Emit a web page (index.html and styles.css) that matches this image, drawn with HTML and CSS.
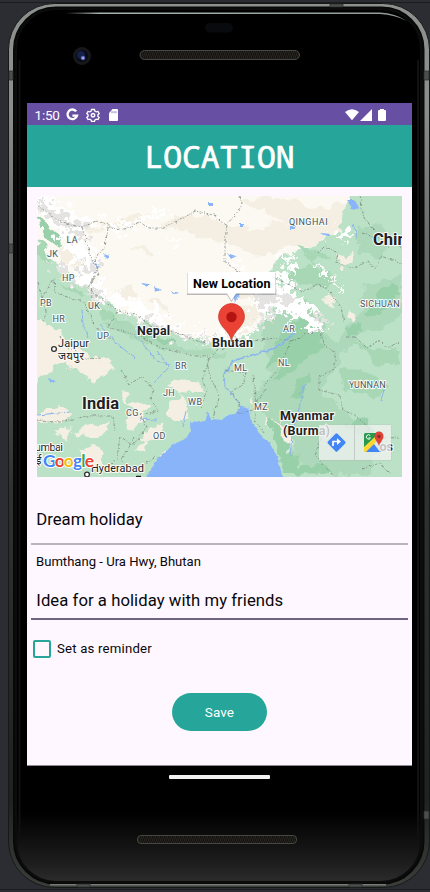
FILE: index.html
```html
<!DOCTYPE html>
<html lang="en">
<head>
<meta charset="utf-8">
<title>Location</title>
<link rel="stylesheet" href="styles.css">
</head>
<body>
<div class="stage">
  <svg class="frame" viewBox="0 0 430 892" aria-hidden="true">
    <defs>
      <linearGradient id="rim" x1="0" y1="0" x2="0" y2="1">
        <stop offset="0" stop-color="#8d918e"/><stop offset=".12" stop-color="#8a8d8a"/><stop offset=".3" stop-color="#626463"/><stop offset=".55" stop-color="#303131"/><stop offset=".9" stop-color="#202221"/><stop offset="1" stop-color="#3a3d3a"/>
      </linearGradient>
      <linearGradient id="glass" x1="0" y1="0" x2="0" y2="1">
        <stop offset="0" stop-color="#000"/><stop offset=".92" stop-color="#000"/><stop offset=".98" stop-color="#1e1e1e"/><stop offset="1" stop-color="#2c2c2c"/>
      </linearGradient>
      <linearGradient id="shine" x1="0" x2="1"><stop offset="0" stop-color="#98a39d" stop-opacity="0"/><stop offset=".1" stop-color="#a8b3ad"/><stop offset="1" stop-color="#929b96"/></linearGradient>
      <pattern id="mesh" width="4" height="6" patternUnits="userSpaceOnUse"><rect width="4" height="6" fill="#11100e"/><path d="M0 0 2 3 0 6M2 0 4 3 2 6" stroke="#3a3832" stroke-width=".6" fill="none"/></pattern>
    </defs>
    <path d="M0 2.5H430M0 889.5H430" stroke="#1b1c20"/>
    <rect x="8.500" y="3.500" width="421" height="884" rx="46" fill="url(#rim)" stroke="#171918"/>
    <rect x="14" y="7.500" width="409.500" height="876" rx="42" fill="#101110" stroke="#080808" stroke-width="2"/>
    <rect x="16" y="9" width="405" height="873" rx="40" fill="url(#glass)" stroke="#0c0c0c" stroke-width="2"/>
    <path d="M19.500 60V835M418 60V835" stroke="#111" stroke-width="2"/>
    <path d="M65 12.500H380Q395 13 407 21Q395 14.800 380 14H65Z" fill="url(#shine)"/>
    <path d="M50 884.700H386" stroke="#777b76" stroke-width="1.500"/>
    <path d="M9 71H13V80H9ZM424 71H429V80H424ZM330 4H343V7H330ZM9 244H13V253H9ZM424 811H429V819H424ZM77 884H90V887H77ZM349 884H362V887H349Z" fill="#4b4e4c" stroke="#292b2a" stroke-width=".7"/>
    <rect x="205" y="23" width="28" height="9.500" rx="4.700" fill="#090a0e"/>
    <circle cx="82" cy="56" r="9" fill="#17181a"/><circle cx="82" cy="56" r="6" fill="#080a16"/><circle cx="81" cy="55" r="4" fill="#15204b"/><circle cx="83" cy="58" r="2.300" fill="#5966b4"/><circle cx="83" cy="58" r="1" fill="#b3bcf6"/>
    <rect x="140" y="50.500" width="159.500" height="9" rx="4.500" fill="url(#mesh)" stroke="#464642"/>
    <rect x="137.500" y="835.500" width="159" height="8" rx="3.500" fill="url(#mesh)" stroke="#464642"/>
  </svg>

  <main class="screen">
    <div class="status">
      <span class="time">1:50</span>
      <svg class="left-icons" viewBox="0 0 53 14">
        <path d="M10.200 3.400A4.800 4.800 0 1 0 11 7.600H6.400" fill="none" stroke="#fff" stroke-width="2.300"/>
        <g transform="translate(27 7)" fill="none" stroke="#fff"><path d="M-1.500-5.500h3l.5 1.700 1.300.7 1.700-.5 1.200 2.200-1.300 1.200v1.500l1.200 1.200L5 4.600l-1.700-.4L2 4.900l-.5 1.400h-3L-2 4.900l-1.300-.7-1.700.4-1.200-2.200 1.300-1.200V-.3L-6.200-1.500-5-3.600l1.700.5L-2-3.800Z" stroke-width="1.300"/><circle cy=".3" r="1.700" stroke-width="1.500"/></g>
        <path d="M43 5.200 46.500 1H51q1 0 1 1v10.200q0 .8-1 .8H43.800q-.8 0-.8-.8Z" fill="#fff"/><path d="M46 3.200v2M48 3.200v2M50 3.200v2" stroke="#6650a2" stroke-width=".7"/>
      </svg>
      <svg class="right-icons" viewBox="0 0 42 14"><path d="M0 4Q7-1.500 14 4L7 12.300ZM15 13H27V1ZM33 3Q33 2.200 34 2H35V1H39V2H40Q41 2.200 41 3V12Q41 13 40 13H34Q33 13 33 12Z" fill="#fff"/></svg>
    </div>
    <header class="title">LOCATION</header>
    <section class="content">
      <svg class="map" viewBox="0 0 365 281" role="img" aria-label="Map of Bhutan">
        <defs>
          <filter id="rough" x="-5%" y="-5%" width="110%" height="110%"><feTurbulence type="fractalNoise" baseFrequency=".09" numOctaves="3" seed="4"/><feDisplacementMap in="SourceGraphic" scale="13" xChannelSelector="R" yChannelSelector="G"/></filter>
          <filter id="peaks" x="-5%" y="-5%" width="110%" height="110%"><feTurbulence type="fractalNoise" baseFrequency=".13" numOctaves="3" seed="11"/><feDisplacementMap in="SourceGraphic" scale="34" xChannelSelector="R" yChannelSelector="G"/></filter>
          <filter id="coast"><feTurbulence type="fractalNoise" baseFrequency=".18" numOctaves="2" seed="8"/><feDisplacementMap in="SourceGraphic" scale="4" xChannelSelector="R" yChannelSelector="G"/></filter>
        </defs>
        <rect width="365" height="281" fill="#bbe2c6"/>
        <g filter="url(#rough)">
          <path d="M-9-9H315L300 28 280 48 240 62 230 82 246 94 231 120 216 136 183 147 145 139 111 126 81 112 61 98 47 85 24 73 7 56-9 45Z" fill="#fcf9f3"/>
          <path d="M-8 124H9L22 134 30 144 43 151 55 162 68 164 78 172 65 180 58 187 48 178 36 174 25 166 12 177 3 185-8 196Z" fill="#f5f0e3"/>
          <g fill="#f4efe2">
            <path d="M18 55 32 50 43 61 53 77 59 99 44 84ZM30 35 70 29 97 18 112 18 90 34ZM95 50 111 52 116 59 106 58ZM124 29 151 15 181 25 225 35 235 24 268 32 290 37 278 49 245 51 224 61 193 49ZM160 88 200 80 228 85 239 96 219 105ZM182 116 212 108 225 112 215 132 187 143ZM205 5 230 0 260 5 280 15 308 4 303 34 280 42ZM75 94 96 90 102 98 89 108ZM110 103 124 103 133 118ZM300 60 315 57 318 67 307 72ZM289 98 300 102 297 111 288 106ZM312 114 318 118 315 126 310 121ZM283 81 289 84 288 90Z"/>
            <path d="M83 194 92 196 91 207 107 205 115 210 103 216 93 211ZM91 222 105 213 110 223 95 233 89 231ZM102 241 111 234 127 229 121 243 108 246ZM98 253 109 244 108 258ZM125 256 132 253 129 262ZM129 190 142 184 161 183 165 195 149 200ZM134 204 145 199 153 211 151 225 136 225 128 215ZM-2 218 23 210 35 216 27 225-2 226ZM17 237 26 230 35 234 30 245ZM35 237 48 231 66 228 74 223 69 237 50 240ZM40 253 57 249 65 254 65 270 55 269ZM238 200 242 206 245 222 256 242 251 256 243 249 235 235 226 220ZM218 193 222 208 218 208Z"/>
          </g>
          <g fill="#add9ba"><path d="M67 127 87 126 114 142 146 152 189 157 182 165 153 158 118 153 87 139ZM228 116 266 101 281 119 292 142 304 151 304 168 290 179 284 199 304 212 321 225 326 242 337 254 335 278 281 278 252 261 259 246 243 226 225 220 217 195 235 179 225 154ZM326 90 349 82 365 79V115L350 132 323 137 309 157 297 153 309 131 324 114ZM320 32 345 27 354 49 343 60 320 56Z"/></g>
          <g fill="#98d0aa"><path d="M95 128 109 138 128 140 142 149 126 149 107 143ZM242 136 270 120 286 135 287 154 271 161 252 177 236 188 245 167 229 171 236 152ZM230 221 243 229 251 256 262 257 259 270 279 269 297 278 247 277ZM340 99 354 86 365 94 352 111 337 121 327 118ZM307 231 320 222 333 225 337 239 353 255 333 253 322 239ZM254 201 262 184 272 177 265 203ZM307 134 319 127 328 134 311 140ZM-3 18 19 37 28 50 7 43Z"/></g>
          <g fill="#a7d7b4"><path d="M1 44 15 63 13 71-2 56ZM21 86 45 96 48 101 34 97ZM52 107 75 117 88 129 66 123ZM262 48 276 53 292 63 274 67ZM250 78 269 68 296 76 290 91 263 88ZM308 142 338 154 359 151 364 167 342 171 333 160ZM304 173 325 174 351 190 340 202 309 194Z"/></g>
        </g>
        <g filter="url(#peaks)">
          <path fill="#fff" d="M-4-3 17 4 33 10 39 18 65 25 75 29 91 29 98 32 78 36 62 28 51 32 35 28 42 42 57 55 63 70 48 73 35 59 28 45 16 35 2 18ZM43 71 61 86 76 98 88 101 111 112 131 126 149 135 161 137 188 139 216 134 211 141 174 145 145 140 129 134 99 119 79 109 59 103 44 89 21 78 19 68 39 76ZM215 91 228 86 258 91 262 107 275 110 282 126 289 134 277 133 265 125 252 119 241 112 225 118 216 113ZM238 55 261 64 256 72 242 65ZM294 37 313 36 311 46ZM272 69 292 72 289 78ZM291 85 308 86 306 91ZM127 48 148 47 142 53ZM188 61 208 65 202 71ZM232 77 251 76 258 87 245 84ZM80 27 102 22 121 13 131 16 115 24 93 29Z"/>
          <path fill="#e4e3e1" d="M1 4 18 12 30 24 43 28 53 42 43 43 21 27 8 18ZM17 63 34 77 45 88 58 95 71 101 63 104 44 90 21 78ZM87 117 111 125 137 134 155 140 180 139 180 143 140 141 103 126ZM218 96 237 93 247 99 259 98 259 106 250 111 235 107 222 110ZM227 117 239 119 231 127 221 127ZM276 121 289 125 285 131ZM41 61 50 68 61 69 57 80 48 75Z"/>
        </g>
        <g filter="url(#coast)" fill="#89b4f9"><path d="M105 286 123 260 137 248 150 242 154 235 153 227 168 224 170 215 174 223 185 224 190 219 198 218 204 210 211 211 214 225 222 237 233 248 240 260 246 282Z"/><path d="M310 4 318 4 322 12 316 14ZM171 6h5v3h-5ZM104 87 112 88 109 91ZM117 91 124 94 118 96ZM134 95 142 97 136 98ZM196 99 205 95 198 106ZM283 37 293 38 290 41ZM55 65 63 71 59 70ZM66 58 73 60 69 63ZM11 182 19 185 13 187ZM190 57 200 60 194 63ZM253 30h4v3h-4ZM203 28h4v3h-4Z"/></g>
        <g fill="none" stroke="#8ab3ee" stroke-width="1" filter="url(#coast)"><path d="M45 112 46 130 52 142M62 128 79 147 98 162M99 140 120 165 132 168M120 155 132 170 118 186M0 219 33 216M103 223 120 224M188 191 187 174M188 191 202 207 207 220M263 198 268 188 261 216 255 239 253 261M316 28 320 42M344 205 348 190M149 216 145 230"/><path d="M187 178 196 165 218 158 241 151 257 137" stroke-width="1.500"/></g>
        <g class="borders" filter="url(#coast)"><path d="M0 9 19 23 33 29 45 31 59 25 71 28 71 32 88 33 102 26 112 32 127 32 144 23 158 15 177 19 189 29 199 18 205 9 203 0M190 29 188 44 188 66 202 76 221 80 241 83 266 96 281 88 291 93 304 111 307 126M45 31 54 62 61 72 51 92 68 106 81 115 99 118 113 129 140 137 163 146 181 145M71 32 68 51 58 63 62 80 54 83 55 101M80 116 70 131 103 140 124 152 156 160 173 160M3 104 17 83 18 96 30 101 47 106 58 131 76 145M181 153 170 166 173 181 182 198 176 222M173 161 165 185 170 193 164 213M185 154 193 149 208 146 238 142 254 145 241 174 226 191M187 174 209 177 205 190 194 196 202 207 202 218 219 213 216 178M229 193 218 208 218 225 229 238M254 145 282 133 288 149 298 157 298 172 282 181 282 194 302 199 306 214 319 220 331 231 334 241 362 242M1 86 10 119 5 125M23 140 27 150 37 153 49 163 64 162M84 174 92 188 105 181 117 194 113 203 122 215 103 219 110 230 96 250 83 240 80 263 61 278M0 225 24 226 50 220 76 220 78 235M284 243 278 260 295 278M280 58 288 50 301 57 299 67 317 72 331 65 338 73 344 60 365 68M325 37 337 41 358 41 365 53M309 141 318 141 330 152 342 144 350 152 363 146M97 242 83 265 100 273 119 260M325 273 343 267 354 278M323 0 327 22 352 52"/></g>
        <g class="state-labels">
          <text x="29.500" y="47">LA</text><text x="10" y="61">JK</text><text x="25" y="85">HP</text><text x="3" y="110">PB</text><text x="15.500" y="126">HR</text><text x="51" y="113">UK</text><text x="60" y="143">UP</text><text x="138" y="173">BR</text><text x="126" y="200">JH</text><text x="151" y="209">WB</text><text x="89" y="220">CG</text><text x="116" y="243">OD</text><text x="197" y="175">ML</text><text x="241" y="170">NL</text><text x="217" y="214">MZ</text><text x="246" y="136">AR</text><text x="252" y="29" textLength="39">QINGHAI</text><text x="323" y="111" textLength="40">SICHUAN</text><text x="312" y="192" textLength="37">YUNNAN</text>
        </g>
        <g class="place-labels">
          <text class="city" x="21" y="151" textLength="31">Jaipur</text><text class="city" x="21" y="164" textLength="26">जयपुर</text><text class="city" x="-2" y="255" textLength="28">umbai</text><text class="city" x="-1" y="268">ई</text><text class="city" x="54" y="276" textLength="53">Hyderabad</text>
          <text class="country" x="100" y="139" textLength="33">Nepal</text><text class="country" x="175" y="151" textLength="41">Bhutan</text><text class="big" x="45" y="213" textLength="37">India</text><text class="big" x="336" y="49">China</text><text class="country" x="243" y="224" textLength="54">Myanmar</text><text class="country" x="246" y="239" textLength="47">(Burma)</text><text class="country" x="329" y="255">Laos</text>
          <path d="M99 280.500H104" stroke="#202124" stroke-width="1.500"/>
          <g fill="#fff" stroke="#333" stroke-width="1.300"><circle cx="17" cy="153" r="2.400"/><circle cx="50" cy="278.500" r="2.400"/></g>
        </g>
        <text class="google" x="6" y="271" textLength="51"><tspan fill="#4285f4">G</tspan><tspan fill="#ea4335">o</tspan><tspan fill="#fbbc05">o</tspan><tspan fill="#4285f4">g</tspan><tspan fill="#34a853">l</tspan><tspan fill="#ea4335">e</tspan></text>
        <path d="M194.500 145.500C193.500 135 181.500 131 181.500 120.500A13 13 0 0 1 207.500 120.500C207.500 131 195.500 135 194.500 145.500Z" fill="#ea4335" stroke="#c83830" stroke-width=".7"/><circle cx="194.500" cy="121" r="5.200" fill="#b31412"/>
        <path d="M150 76H239V98H199L194.500 105 190 98H150Z" transform="translate(0 1)" fill="#777" opacity=".5"/><path d="M150.500 76H238.500V97.500H199L194.500 104.500 190 97.500H150.500Z" fill="#fff"/><text class="info" x="156" y="92" textLength="77.500">New Location</text>
        <rect x="281.500" y="228.500" width="73" height="36.500" rx="1" fill="#aaa" opacity=".25"/><path d="M282 229H354V264H282Z" fill="#f8faf8" opacity=".7"/><path d="M317.500 229V264" stroke="#c2cec5"/>
        <path d="M299.500 237.200Q300 237.200 300.500 237.700L308.200 245.600Q309 246.600 308.200 247.400L300.500 255.200Q299.500 256.200 298.500 255.200L290.900 247.400Q290 246.500 290.900 245.500L298.500 237.700Q299 237.200 299.500 237.200Z" fill="#4285f4"/><path d="M296 250V245.500H301" fill="none" stroke="#fff" stroke-width="1.700"/><path d="M300 242.200 304 245.500 300 248.900Z" fill="#fff"/>
        <g><rect x="327" y="237" width="16" height="19" rx="1.500" fill="#279a4d"/><path d="M327 251 340 239 344 242 330 256H327Z" fill="#fdd835"/><path d="M329 256 337 248 344 256Z" fill="#4285f4"/><path d="m337 248 4-5 2 2v11Z" fill="#e2e5e8"/><path d="M333.200 239.500A2.200 2.200 0 1 0 333.500 242H331.500" fill="none" stroke="#fff"/><path d="M342 250C341 246 337.500 244 337.500 240A4.500 4.500 0 0 1 346.500 240C346.500 244 343 246 342 250Z" fill="#dc4437"/><circle cx="342" cy="240.500" r="1.700" fill="#922b27"/></g>
      </svg>
      <div class="field name">Dream holiday</div>
      <p class="address">Bumthang - Ura Hwy, Bhutan</p>
      <div class="field idea">Idea for a holiday with my friends</div>
      <label class="reminder"><span class="box"></span><span>Set as reminder</span></label>
      <button class="save">Save</button>
    </section>
  </main>
  <div class="home"></div>
</div>
</body>
</html>
```

FILE: styles.css
```css
* { box-sizing: border-box; }
body { margin: 0; background: #2b2d32; font-family: Roboto, "Noto Sans", sans-serif; overflow: hidden; }
.stage { position: relative; width: 430px; height: 892px; padding: 103px 18px 0 27px; }
.frame { position: absolute; inset: 0; width: 430px; height: 892px; }
.screen { position: relative; width: 385px; height: 663px; background: #fef7ff; border-bottom: 1px solid #8e8990; }
.status { height: 22px; padding: 1px 25px 0 7.500px; background: #6750a4; color: #fff; display: flex; align-items: center; }
.time { width: 31px; font-size: 13.5px; line-height: 20px; letter-spacing: -.2px; }
.left-icons { width: 53px; height: 14px; }
.right-icons { width: 42px; height: 14px; margin-left: auto; }
.title { height: 61.500px; background: #26a69a; color: #fff; text-align: center; font-family: "Noto Sans Mono", "DejaVu Sans Mono", monospace; font-size: 31.300px; line-height: 62px; -webkit-text-stroke: .7px #fff; }
.content { display: flex; flex-direction: column; padding: 9.500px 3px 0; }
.map { width: 365px; height: 281px; margin-left: 7px; flex: none; overflow: hidden; }
.borders { fill: none; stroke: #7b8781; stroke-width: .8px; stroke-dasharray: 3 1.500 1 1.500; }
.state-labels { font-size: 9px; letter-spacing: .4px; fill: #46545c; stroke: #f7faf6; stroke-width: 2px; paint-order: stroke; }
.place-labels text { fill: #202124; stroke: #f7faf6; stroke-width: 2.200px; stroke-linejoin: round; paint-order: stroke; }
.city { font-size: 11px; font-family: Roboto, "Noto Sans", "Noto Sans Devanagari", sans-serif; }
.place-labels .country { font-size: 12.500px; font-weight: 700; }
.place-labels .big { font-size: 16.500px; font-weight: 700; }
.google { font: 17.500px Lato, sans-serif; font-weight: 700; stroke: #fff; stroke-width: 2px; paint-order: stroke; }
.info { font-size: 12.500px; font-weight: 700; fill: #000; }
.field { color: #08070a; font-size: 16.700px; padding-left: 5.300px; margin-right: 1px; margin-left: 1px; }
.name { height: 68px; padding-top: 32px; line-height: 21px; border-bottom: 2px solid #bbb4be; }
.address { margin: 8px 0 0 6px; height: 19px; font-size: 13.100px; line-height: 18px; color: #08070a; }
.idea { height: 48px; padding-top: 18px; line-height: 22px; border-bottom: 2px solid #6e6680; letter-spacing: .05px; }
.reminder { display: flex; align-items: center; gap: 6px; height: 18px; margin: 19.500px 0 0 3px; font-size: 13.200px; color: #08070a; letter-spacing: .2px; }
.box { width: 18px; height: 18px; border: 2px solid #26a69a; border-radius: 2px; }
.save { width: 95px; height: 38px; margin: 35.500px auto 0; padding: 0; border: 0; border-radius: 19px; background: #26a69a; color: #fff; font: 13.500px Roboto, sans-serif; letter-spacing: .1px; }
.home { position: relative; width: 101px; height: 4px; margin: 9px 0 0 142px; border-radius: 1px; background: #f2f2f2; }
```
